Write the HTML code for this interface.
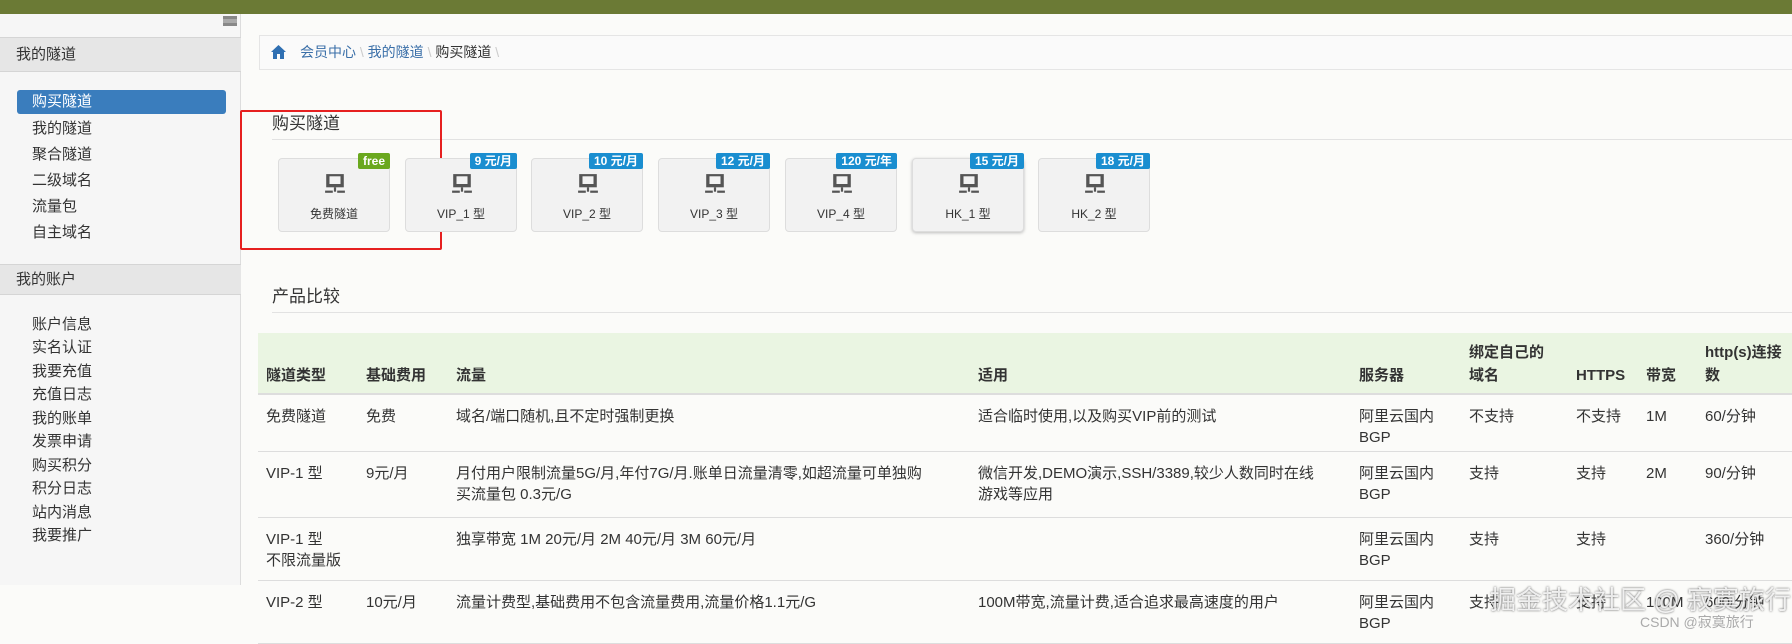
<!DOCTYPE html><html><head><meta charset="utf-8"><style>
*{margin:0;padding:0;box-sizing:border-box}
body{width:1792px;height:633px;overflow:hidden;background:#fbfbf9;font-family:"Liberation Sans","Noto Sans CJK SC",sans-serif;color:#333;position:relative;font-size:15px}
.top{position:absolute;left:0;top:0;width:1792px;height:14px;background:#6b7a35}
.side{position:absolute;left:0;top:14px;width:241px;height:571px;background:#f6f6f6;border-right:1px solid #ddd}
.hd{position:absolute;left:0;width:241px;background:#e6e6e6;border-top:1px solid #d5d5d5;border-bottom:1px solid #d5d5d5;padding-left:16px;font-size:15px;color:#333}
.it{position:absolute;left:32px;font-size:15px;color:#333}
.act{position:absolute;left:17px;top:90px;width:209px;height:24px;background:#3a7dbd;border-radius:3px;color:#fff;padding-left:15px;line-height:24px}
.bc{position:absolute;left:259px;top:35px;width:1540px;height:35px;border:1px solid #e5e5e5;background:#fafafa;font-size:14px;line-height:33px;padding-left:40px;color:#3a6fa8}
.sec{position:absolute;left:272px;font-size:17px;color:#333}
.line{position:absolute;left:272px;width:1520px;height:1px;background:#e2e2e2}
.card{position:absolute;top:158px;width:112px;height:74px;border:1px solid #ddd;border-radius:4px;background:#f2f2f2;text-align:center;font-size:12px;color:#333}
.card .ic{position:absolute;left:45px;top:14px}
.card .t{position:absolute;left:0;right:0;top:46px}
.bd{position:absolute;top:-6px;right:-1px;background:#1a8ed0;color:#fff;font-size:12px;font-weight:bold;padding:0 5px;line-height:16px;border-radius:2px}
table{position:absolute;left:258px;top:333px;width:1540px;border-collapse:collapse;font-size:15px}
th{background:#eaf5e2;text-align:left;vertical-align:bottom;font-weight:bold;padding:6px 8px;line-height:23px;border-bottom:2px solid #ddd;height:61px}
td{vertical-align:top;padding:11px 8px 0;line-height:21px;border-bottom:1px solid #ddd}
</style></head><body>
<div class="top"></div>
<div class="side">
<div style="position:absolute;left:223px;top:2px;width:14px;height:10px;border-top:3px solid #888;border-bottom:3px solid #888;background:#aaa"></div>
<div class="hd" style="top:23px;height:35px;line-height:33px">我的隧道</div>
<div class="act" style="top:76px">购买隧道</div>
<div class="it" style="top:103px">我的隧道</div>
<div class="it" style="top:129px">聚合隧道</div>
<div class="it" style="top:155px">二级域名</div>
<div class="it" style="top:181px">流量包</div>
<div class="it" style="top:207px">自主域名</div>
<div class="hd" style="top:250px;height:31px;line-height:29px">我的账户</div>
<div class="it" style="top:299px">账户信息</div>
<div class="it" style="top:322px">实名认证</div>
<div class="it" style="top:346px">我要充值</div>
<div class="it" style="top:369px">充值日志</div>
<div class="it" style="top:393px">我的账单</div>
<div class="it" style="top:416px">发票申请</div>
<div class="it" style="top:440px">购买积分</div>
<div class="it" style="top:463px">积分日志</div>
<div class="it" style="top:487px">站内消息</div>
<div class="it" style="top:510px">我要推广</div>
</div>
<div class="bc"><svg style="position:absolute;left:11px;top:9px" width="15" height="14" viewBox="0 0 15 14"><path d="M7.5 0L0 7h2v7h4V9h3v5h4V7h2z" fill="#2f6fb2"/></svg>会员中心 <span style="color:#ccc">\</span> 我的隧道 <span style="color:#ccc">\</span> <span style="color:#333">购买隧道</span> <span style="color:#ccc">\</span></div>
<div class="sec" style="top:109px">购买隧道</div><div class="line" style="top:139px"></div>
<div style="position:absolute;left:240px;top:110px;width:202px;height:140px;border:2px solid #e62020;border-radius:2px"></div>
<div class="sec" style="top:282px">产品比较</div><div class="line" style="top:312px"></div>
<div class="card" style="left:278px"><span class="bd" style="background:#6aa81e">free</span><svg class="ic" width="22" height="22" viewBox="0 0 20 20"><rect x="2" y="1" width="16" height="12" fill="#555"/><rect x="5" y="3" width="10" height="7" fill="#f2f2f2"/><rect x="9" y="13" width="2" height="4" fill="#555"/><rect x="1" y="16" width="7" height="2" fill="#555"/><rect x="12" y="16" width="7" height="2" fill="#555"/></svg><div class="t">免费隧道</div></div>
<div class="card" style="left:405px"><span class="bd">9 元/月</span><svg class="ic" width="22" height="22" viewBox="0 0 20 20"><rect x="2" y="1" width="16" height="12" fill="#555"/><rect x="5" y="3" width="10" height="7" fill="#f2f2f2"/><rect x="9" y="13" width="2" height="4" fill="#555"/><rect x="1" y="16" width="7" height="2" fill="#555"/><rect x="12" y="16" width="7" height="2" fill="#555"/></svg><div class="t">VIP_1 型</div></div>
<div class="card" style="left:531px"><span class="bd">10 元/月</span><svg class="ic" width="22" height="22" viewBox="0 0 20 20"><rect x="2" y="1" width="16" height="12" fill="#555"/><rect x="5" y="3" width="10" height="7" fill="#f2f2f2"/><rect x="9" y="13" width="2" height="4" fill="#555"/><rect x="1" y="16" width="7" height="2" fill="#555"/><rect x="12" y="16" width="7" height="2" fill="#555"/></svg><div class="t">VIP_2 型</div></div>
<div class="card" style="left:658px"><span class="bd">12 元/月</span><svg class="ic" width="22" height="22" viewBox="0 0 20 20"><rect x="2" y="1" width="16" height="12" fill="#555"/><rect x="5" y="3" width="10" height="7" fill="#f2f2f2"/><rect x="9" y="13" width="2" height="4" fill="#555"/><rect x="1" y="16" width="7" height="2" fill="#555"/><rect x="12" y="16" width="7" height="2" fill="#555"/></svg><div class="t">VIP_3 型</div></div>
<div class="card" style="left:785px"><span class="bd">120 元/年</span><svg class="ic" width="22" height="22" viewBox="0 0 20 20"><rect x="2" y="1" width="16" height="12" fill="#555"/><rect x="5" y="3" width="10" height="7" fill="#f2f2f2"/><rect x="9" y="13" width="2" height="4" fill="#555"/><rect x="1" y="16" width="7" height="2" fill="#555"/><rect x="12" y="16" width="7" height="2" fill="#555"/></svg><div class="t">VIP_4 型</div></div>
<div class="card" style="left:912px;box-shadow:0 1px 3px #bbb"><span class="bd">15 元/月</span><svg class="ic" width="22" height="22" viewBox="0 0 20 20"><rect x="2" y="1" width="16" height="12" fill="#555"/><rect x="5" y="3" width="10" height="7" fill="#f2f2f2"/><rect x="9" y="13" width="2" height="4" fill="#555"/><rect x="1" y="16" width="7" height="2" fill="#555"/><rect x="12" y="16" width="7" height="2" fill="#555"/></svg><div class="t">HK_1 型</div></div>
<div class="card" style="left:1038px"><span class="bd">18 元/月</span><svg class="ic" width="22" height="22" viewBox="0 0 20 20"><rect x="2" y="1" width="16" height="12" fill="#555"/><rect x="5" y="3" width="10" height="7" fill="#f2f2f2"/><rect x="9" y="13" width="2" height="4" fill="#555"/><rect x="1" y="16" width="7" height="2" fill="#555"/><rect x="12" y="16" width="7" height="2" fill="#555"/></svg><div class="t">HK_2 型</div></div>
<table>
<colgroup><col style="width:100px"><col style="width:90px"><col style="width:522px"><col style="width:381px"><col style="width:110px"><col style="width:107px"><col style="width:70px"><col style="width:59px"><col></colgroup>
<tr><th>隧道类型</th><th>基础费用</th><th>流量</th><th>适用</th><th>服务器</th><th>绑定自己的<br>域名</th><th>HTTPS</th><th>带宽</th><th>http(s)连接<br>数</th></tr>
<tr style="height:57px"><td>免费隧道</td><td>免费</td><td>域名/端口随机,且不定时强制更换</td><td>适合临时使用,以及购买VIP前的测试</td><td>阿里云国内<br>BGP</td><td>不支持</td><td>不支持</td><td>1M</td><td>60/分钟</td></tr>
<tr style="height:66px"><td>VIP-1 型</td><td>9元/月</td><td>月付用户限制流量5G/月,年付7G/月.账单日流量清零,如超流量可单独购<br>买流量包 0.3元/G</td><td>微信开发,DEMO演示,SSH/3389,较少人数同时在线<br>游戏等应用</td><td>阿里云国内<br>BGP</td><td>支持</td><td>支持</td><td>2M</td><td>90/分钟</td></tr>
<tr style="height:63px"><td>VIP-1 型<br>不限流量版</td><td></td><td>独享带宽 1M 20元/月 2M 40元/月 3M 60元/月</td><td></td><td>阿里云国内<br>BGP</td><td>支持</td><td>支持</td><td></td><td>360/分钟</td></tr>
<tr style="height:63px"><td>VIP-2 型</td><td>10元/月</td><td>流量计费型,基础费用不包含流量费用,流量价格1.1元/G</td><td>100M带宽,流量计费,适合追求最高速度的用户</td><td>阿里云国内<br>BGP</td><td>支持</td><td>支持</td><td>100M</td><td>600/分钟</td></tr>
</table>
<div style="position:absolute;left:1490px;top:580px;font-size:26px;color:rgba(255,255,255,.85);text-shadow:0 0 2px #555">掘金技术社区 @ 寂寞旅行</div>
<div style="position:absolute;left:1640px;top:612px;font-size:14px;color:#aaa">CSDN @寂寞旅行</div>
</body></html>
